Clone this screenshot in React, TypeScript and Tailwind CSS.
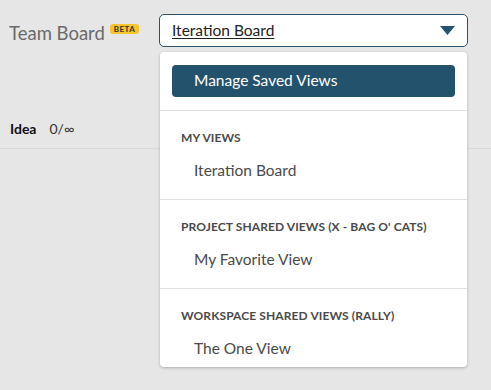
import React from 'react';

const sections = [
  { title: 'My Views', item: 'Iteration Board' },
  { title: "Project Shared Views (X - Bag O' Cats)", item: 'My Favorite View' },
  { title: 'Workspace Shared Views (Rally)', item: 'The One View' },
];

const ViewSection: React.FC<{ title: string; item: string; last?: boolean }> = ({ title, item, last }) => (
  <div className={`border-t border-[#e2e2e2] pt-[19px] ${last ? 'pb-[9px]' : 'pb-[19px]'}`}>
    <p className="pl-[21px] text-[12px] leading-[16px] font-bold uppercase tracking-[0.1px] text-[#4a4a4a]">{title}</p>
    <p className="mt-[14px] pl-[34px] text-[15.5px] leading-[20px] text-[#4a4a4a]">{item}</p>
  </div>
);

const App: React.FC = () => {
  return (
    <div className="relative w-[491px] h-[390px] overflow-hidden bg-[#e6e6e6] font-['Lato','Open_Sans',sans-serif]">
      <header className="flex items-center h-[62px] pl-[9px] pt-[1px]">
        <div className="flex items-start w-[150px]">
          <span className="text-[18.5px] leading-[22px] text-[#6a6a6a] mt-[3px]">Team Board</span>
          <span className="ml-[5px] mt-[5px] rounded-[3px] bg-[#f6c52e] px-[4px] text-[8px] leading-[10px] font-bold tracking-[0.4px] text-[#333]">BETA</span>
        </div>
        <div className="flex items-center h-[33px] w-[309px] -mt-[3px] rounded-[5px] border border-[#2c5169] bg-white pl-[12px] pr-[12px]">
          <span className="flex-1 text-[15.5px] leading-[20px] text-[#222] underline underline-offset-2">Iteration Board</span>
          <svg width="15" height="9" viewBox="0 0 15 9">
            <path d="M0 0 H15 L7.5 9 Z" fill="#23536e" />
          </svg>
        </div>
      </header>

      <div className="flex items-center h-[42px] mt-[45px] pl-[10px] gap-[13px] border-b border-[#dadada] text-[14px] pt-[1px]">
        <span className="font-bold text-[#111]">Idea</span>
        <span className="text-[#333]">0/∞</span>
      </div>

      <div className="absolute left-[160px] top-[52px] w-[307px] rounded-[4px] bg-white shadow-[0_1px_3px_rgba(0,0,0,0.25)]">
        <div className="px-[12px] pt-[13px] pb-[13px]">
          <button className="flex items-center w-full h-[32px] rounded-[4px] bg-[#23526d] pl-[22px] text-[15.5px] text-white">
            Manage Saved Views
          </button>
        </div>
        {sections.map((s, i) => (
          <ViewSection key={s.title} title={s.title} item={s.item} last={i === sections.length - 1} />
        ))}
      </div>
    </div>
  );
};

export default App;
